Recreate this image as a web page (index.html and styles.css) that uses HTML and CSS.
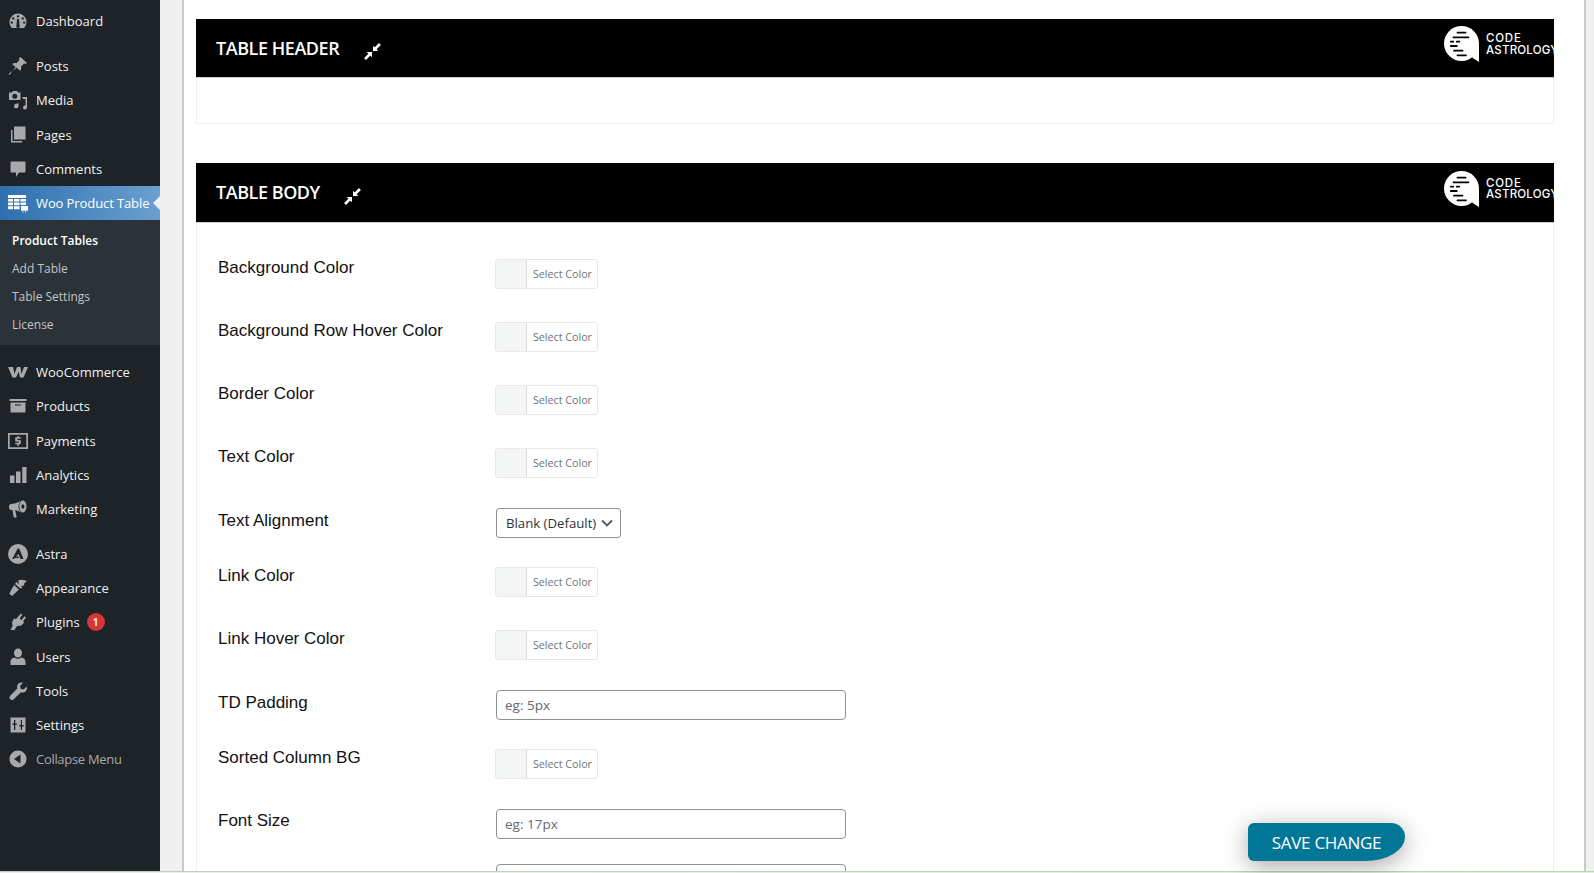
FILE: index.html
```html
<!DOCTYPE html>
<html lang="en">
<head>
<meta charset="utf-8">
<title>Product Tables</title>
<link rel="stylesheet" href="styles.css">
</head>
<body>
<div class="page">
<aside class="sidebar">
  <nav class="menu">
    <a class="item first"><svg class="ico" viewBox="0 0 20 20"><path d="M10 2.500a8.500 8.500 0 0 0-8.500 8.500c0 2.300.9 4.400 2.400 6h12.200a8.500 8.500 0 0 0 2.400-6A8.500 8.500 0 0 0 10 2.500zM10 4.200a1.200 1.200 0 1 1 0 2.400 1.200 1.200 0 0 1 0-2.400zM5.300 6.200a1.200 1.200 0 1 1 0 2.400 1.200 1.200 0 0 1 0-2.400zM14.700 6.200a1.200 1.200 0 1 1 0 2.400 1.200 1.200 0 0 1 0-2.400zM3.800 10.400a1.200 1.200 0 1 1 0 2.400 1.200 1.200 0 0 1 0-2.400zM16.200 10.400a1.200 1.200 0 1 1 0 2.400 1.200 1.200 0 0 1 0-2.400zM9 8h2l.5 6.200a1.800 1.800 0 1 1-3 0z" fill-rule="evenodd"/></svg><span>Dashboard</span></a>
    <a class="item sep"><svg class="ico" viewBox="0 0 20 20"><path d="M12.500 1l6.500 6-1.300 1-1.400-.6-3.300 3.200c.5 1.400.2 3-.7 4.100L7.600 10.900 1.500 19 .5 18l7.800-6-4.100-4.100c1.100-.9 2.700-1.200 4.100-.7l3.200-3.300-.6-1.400z"/></svg><span>Posts</span></a>
    <a class="item"><svg class="ico" viewBox="0 0 20 20"><path d="M1 2.500h3l1-1.500h4l1 1.500h2.500V10H1zM6.800 3.700a2.500 2.500 0 1 0 0 5 2.500 2.500 0 0 0 0-5z" fill-rule="evenodd"/><path d="M14 7h5v10.500a2 2 0 1 1-1.500-1.900V9h-2.200zM8 13.500h2.500V16a2.200 2.200 0 1 1-1.500-2z"/></svg><span>Media</span></a>
    <a class="item"><svg class="ico" viewBox="0 0 20 20"><path d="M6 1.500h11.500v13H6z"/><path d="M3 5h1.500v11h9.500v1.500H3z"/></svg><span>Pages</span></a>
    <a class="item"><svg class="ico" viewBox="0 0 20 20"><path d="M3.500 2.500h13a1 1 0 0 1 1 1v9a1 1 0 0 1-1 1H11l-3 4.500v-4.500H3.500a1 1 0 0 1-1-1v-9a1 1 0 0 1 1-1z"/></svg><span>Comments</span></a>
    <div class="current-group">
      <a class="item current"><svg class="ico table-ico" viewBox="0 0 20 20"><path d="M0 2h18v3H0zM0 6h5v2.600H0zM6 6h5.500v2.600H6zM12.500 6H18v2.600h-5.500zM0 9.600h5v2.600H0zM6 9.600h5.500v2.600H6zM12.500 9.600H18v2.400h-5.500zM0 13.200h5v3H0zM6 13.200h5.500v3H6zM13 13h7v4.800h-7zM14.500 18.500h1v1h-1zM17 18.500h1v1h-1z"/></svg><span class="tight">Woo Product Table</span></a>
      <ul class="submenu">
        <li class="strong">Product Tables</li>
        <li>Add Table</li>
        <li>Table Settings</li>
        <li>License</li>
      </ul>
    </div>
    <a class="item sep-small"><svg class="ico wide" viewBox="0 0 20 12"><path d="M0 1h5l1.500 7L9 1h3.500l1 7L16 1h4l-4.500 10.500h-3.500L10.800 5.500 8 11.500H4.500z"/></svg><span>WooCommerce</span></a>
    <a class="item"><svg class="ico" viewBox="0 0 20 20"><path d="M1.500 3h17v2h-17zM2.500 6.500h15v10h-15zM7 8.500v1h6v-1z" fill-rule="evenodd"/></svg><span>Products</span></a>
    <a class="item"><svg class="ico" viewBox="0 0 20 20"><path d="M0 2h20v16H0zM1.700 3.700v12.600h16.600V3.700z" fill-rule="evenodd"/><path d="M9.300 5h1.400v1.200h2.100v1.500H9.300v1.300h2.500c.7 0 1 .4 1 1v2.200c0 .7-.3 1-1 1h-1.100V15H9.300v-1.800H7.200v-1.500h3.500v-1.300H8.200c-.7 0-1-.3-1-1V7.200c0-.7.3-1 1-1h1.100z"/></svg><span>Payments</span></a>
    <a class="item"><svg class="ico" viewBox="0 0 20 20"><path d="M2 10.500h4.500V18H2zM8 6.500h4.500V18H8zM14.300 2H18.500v16h-4.200z"/></svg><span>Analytics</span></a>
    <a class="item"><svg class="ico" viewBox="0 0 20 20"><path d="M18.500 7.500c0 3.300-1.700 6-3.600 6-2 0-3.600-2.700-3.600-6s1.600-6 3.600-6c1.900 0 3.600 2.700 3.600 6zM14.900 5.200c-.8 0-1.500 1-1.500 2.300s.7 2.300 1.500 2.300 1.500-1 1.500-2.300-.7-2.300-1.500-2.300z" fill-rule="evenodd"/><path d="M13 1.500C10.500 3.500 6 5 3 5 1.500 5 1 6.500 1 8s.5 3 2 3h1.500l1 6.500c.1.600.5 1 1 1h2.200L7.200 11.300c2 .2 4 1 5.800 2.200-1.500-1.500-2.500-3.500-2.500-6s1-4.500 2.500-6z"/></svg><span>Marketing</span></a>
    <a class="item sep-astra"><svg class="ico" viewBox="0 0 20 20"><path d="M10 0a10 10 0 1 0 0 20 10 10 0 0 0 0-20zM9.700 4.500h1.500l4.300 10.500h-3l-2-5-2.500 2.500h2.200l.6 1.500H6.700L5.900 15H4.200z" fill-rule="evenodd"/></svg><span>Astra</span></a>
    <a class="item"><svg class="ico" viewBox="0 0 20 20"><path d="M10 2.500c2-1 5-.8 6.500-.2l2.500.8-2.500 2-.5 2.500-2.500.5-1.500 1.300zM8.500 4l6 5.500-2 1-5.500-4.500zM6 7l5 4.500-7 6.500-2.700-2.500z"/></svg><span>Appearance</span></a>
    <a class="item"><svg class="ico" viewBox="0 0 20 20"><path d="M13 1.500l1.500 1.200-3 3.800 2 1.600 3-3.800 1.500 1.200-3 3.800 1.300 1-1.200 1.400c-1.600 2-4 2.700-6 2L6.500 18H2.500l2.300-4.500C3.700 12 3.900 9.600 5.300 7.800l1.200-1.500 1.300 1z"/></svg><span>Plugins</span><b class="badge">1</b></a>
    <a class="item"><svg class="ico" viewBox="0 0 20 20"><path d="M10 1.500a4 4.500 0 1 1 0 9 4 4.500 0 0 1 0-9zM6.500 10.500c1 .8 2.200 1.200 3.500 1.200s2.500-.4 3.500-1.200c2.500.5 4 2 4 4.500v3h-15v-3c0-2.500 1.500-4 4-4.500z"/></svg><span>Users</span></a>
    <a class="item"><svg class="ico" viewBox="0 0 20 20"><path d="M13.500 1.500c-2.500 0-4.500 2-4.500 4.500 0 .6.100 1.100.3 1.600L2 15a2.500 2.500 0 0 0 3.500 3.500l7.400-7.300c.5.200 1 .3 1.600.3 2.500 0 4.500-2 4.500-4.500l-.4-1.600-3.100 3-2.800-.7-.7-2.800 3-3.100z"/></svg><span>Tools</span></a>
    <a class="item"><svg class="ico" viewBox="0 0 20 20"><path d="M2.500 2.500h15v15h-15zM6 5v3.500H4.500V10H6v5h1.300v-5h1.500V8.500H7.300V5zM12.800 5v5h-1.500v1.500h1.500V15H14v-3.500h1.500V10H14V5z" fill-rule="evenodd"/></svg><span>Settings</span></a>
    <a class="item muted"><svg class="ico" viewBox="0 0 20 20"><path d="M10 1.500a8.500 8.500 0 1 0 0 17 8.500 8.500 0 0 0 0-17zM12.500 5.500v9L6 10z" fill-rule="evenodd"/></svg><span>Collapse Menu</span></a>
  </nav>
</aside>
<div class="gutter"></div>
<main class="content">
  <section class="panel short">
    <header class="bar">
      <h2>TABLE HEADER</h2>
      <svg class="shrink" viewBox="0 0 16 16"><path d="M15 1l-5 5M1 15l5-5" stroke="#fff" stroke-width="2.600"/><path d="M8.500 2.500v5h5zM7.500 13.500v-5h-5z"/></svg>
      <div class="logo">
        <svg class="logo-mark" viewBox="0 0 36 36"><circle cx="17.500" cy="17.500" r="17.500" fill="#fff"/><path d="M35 17.500V36l-7-4.500z" fill="#fff"/><path d="M13.500 6.700h8M9.500 11.300h15M6.800 15.700h2.500M12.800 15.700h2.500M6.800 20h6M10 24.700h8.500M13.500 29.300h8.500" stroke="#000" stroke-width="1.800" stroke-linecap="round" fill="none"/></svg>
        <div class="logo-text"><span class="logo-top">CODE</span><span>ASTROLOGY</span></div>
      </div>
    </header>
  </section>
  <section class="panel">
    <header class="bar tall">
      <h2>TABLE BODY</h2>
      <svg class="shrink" viewBox="0 0 16 16"><path d="M15 1l-5 5M1 15l5-5" stroke="#fff" stroke-width="2.600"/><path d="M8.500 2.500v5h5zM7.500 13.500v-5h-5z"/></svg>
      <div class="logo">
        <svg class="logo-mark" viewBox="0 0 36 36"><circle cx="17.500" cy="17.500" r="17.500" fill="#fff"/><path d="M35 17.500V36l-7-4.500z" fill="#fff"/><path d="M13.500 6.700h8M9.500 11.300h15M6.800 15.700h2.500M12.800 15.700h2.500M6.800 20h6M10 24.700h8.500M13.500 29.300h8.500" stroke="#000" stroke-width="1.800" stroke-linecap="round" fill="none"/></svg>
        <div class="logo-text"><span class="logo-top">CODE</span><span>ASTROLOGY</span></div>
      </div>
    </header>
    <div class="form">
      <div class="row color"><label>Background Color</label><div class="picker"><i></i><span>Select Color</span></div></div>
      <div class="row color"><label>Background Row Hover Color</label><div class="picker"><i></i><span>Select Color</span></div></div>
      <div class="row color"><label>Border Color</label><div class="picker"><i></i><span>Select Color</span></div></div>
      <div class="row color"><label>Text Color</label><div class="picker"><i></i><span>Select Color</span></div></div>
      <div class="row field"><label>Text Alignment</label><div class="select"><span>Blank (Default)</span><svg viewBox="0 0 12 8"><path d="M1 1.500l5 5 5-5" fill="none" stroke="#50575e" stroke-width="1.800"/></svg></div></div>
      <div class="row color"><label>Link Color</label><div class="picker"><i></i><span>Select Color</span></div></div>
      <div class="row color"><label>Link Hover Color</label><div class="picker"><i></i><span>Select Color</span></div></div>
      <div class="row field"><label>TD Padding</label><div class="input">eg: 5px</div></div>
      <div class="row color"><label>Sorted Column BG</label><div class="picker"><i></i><span>Select Color</span></div></div>
      <div class="row field"><label>Font Size</label><div class="input">eg: 17px</div></div>
      <div class="row field"><label></label><div class="input"></div></div>
    </div>
  </section>
</main>
<div class="edge"></div>
</div>
<a class="save">SAVE CHANGE</a>
<div class="strip"></div>
</body>
</html>
```
FILE: styles.css
```css
*{box-sizing:border-box}
html,body{margin:0;height:100%;overflow:hidden}
body{background:#f0f0f1;font-family:"Open Sans","Noto Sans",sans-serif;position:relative}
.page{display:flex;height:871px;overflow:hidden}
.sidebar{width:160px;flex:none;background:#1d2327;color:#f0f0f1;padding-top:4px}
.menu{display:flex;flex-direction:column}
.item{display:flex;align-items:center;height:34.2px;font-size:13px;color:#f0f0f1;position:relative}
.item .ico{width:20px;height:20px;margin:0 8px;fill:#a7aaad;flex:none}
.item .ico.wide{height:12px}
.item.sep{margin-top:11px}
.item.sep-small{margin-top:10.6px}
.item.sep-astra{margin-top:10.8px}
.item.current{background:linear-gradient(90deg,#2e6fae,#6aa0d0);color:#fff}
.item.current .table-ico{fill:#fff}
.item.current::after{content:"";position:absolute;right:0;top:50%;margin-top:-7px;border:7px solid transparent;border-right-color:#f0f0f1;border-left:0}
.tight{letter-spacing:-.1px}
.current-group{display:flex;flex-direction:column}
.submenu{list-style:none;margin:0;padding:8px 0 4.4px;background:#2c3338;font-size:12px}
.submenu li{height:28px;line-height:26px;padding-left:12px;color:#c3c4c7}
.submenu li.strong{color:#fff;font-weight:600}
.item.muted{color:#a7aaad;letter-spacing:-.3px}
.badge{width:18px;height:18px;border-radius:50%;background:#d63638;color:#fff;font-size:11px;font-weight:600;line-height:18px;text-align:center;margin-left:7px}
.gutter{width:24px;flex:none;background:#f0f0f1;border-right:2px solid #c9cacc}
.content{flex:none;width:1400px;background:#fff;padding:19px 30px 0 12px;overflow:hidden}
.edge{flex:1;border-left:2px solid #c9cacc}
.panel{border:1px solid #f0f0f1;border-top:0;margin-bottom:39px;background:#fff}
.panel.short{height:105px}
.bar{background:#000;height:59px;display:flex;align-items:center;padding-left:20px;color:#fff;overflow:hidden;border-bottom:1px solid #ccc;position:relative;margin:0 -1px}
.bar.tall{height:60px}
.bar h2{margin:0;font-size:18px;font-weight:600;font-family:"Open Sans",sans-serif;letter-spacing:-.45px}
.bar.tall h2{margin-bottom:2px}
.shrink{width:17px;height:17px;fill:#fff;margin-left:25px;margin-top:6px}
.bar.tall .shrink{margin-top:8px;margin-left:24px}
.logo{margin-left:auto;display:flex;align-items:center;width:110px;height:36px;margin-top:-8px;flex:none}
.logo-mark{width:36px;height:36px;flex:none}
.logo-text{display:flex;flex-direction:column;font-family:Inter,sans-serif;font-size:11.5px;font-weight:500;letter-spacing:.2px;line-height:11.5px;margin-left:6px;white-space:nowrap;padding-top:1px}
.logo-top{letter-spacing:.8px}
.form{padding:34.5px 0 0 21px}
.row{display:flex;align-items:flex-start}
.row label{width:278px;flex:none;font-family:"Liberation Sans",Arial,sans-serif;font-size:17px;line-height:20px;color:#111}
.row.color{height:63.3px}
.row.field{height:55.45px}
.picker{display:flex;width:103px;height:30px;margin-top:1px;border:1px solid #e8e8e8;border-radius:3px;overflow:hidden;margin-left:-1px;background:#fff}
.picker i{display:block;width:31px;background:#f4f5f5;border-right:1px solid #d8d8d8}
.picker span{font-size:10.7px;line-height:28px;padding-left:6px;color:#6e7378}
.select{display:flex;align-items:center;width:125px;height:30px;margin-top:-2.5px;border:1px solid #8c8f94;border-radius:3px;padding:0 7px 0 9px;font-size:13.2px;color:#2c3338;justify-content:space-between}
.select svg{width:12px;height:8px}
.input{width:350px;height:30px;margin-top:-2.5px;border:1px solid #8c8f94;border-radius:4px;padding-left:8px;font-size:13.5px;line-height:28px;color:#646970}
.save{position:absolute;left:1248px;top:823px;width:157px;height:38px;background:#017697;color:#fff;font-size:17px;line-height:39px;text-align:center;border-radius:6px 14px 40px 6px/6px 14px 24px 6px;box-shadow:0 5px 25px rgba(0,0,0,.35);letter-spacing:-.3px}
.strip{height:2px;background:linear-gradient(90deg,#c8c9c8,#b5dcb0) top/100% 1px no-repeat,linear-gradient(90deg,#ededed,#dcf2d8)}
```
